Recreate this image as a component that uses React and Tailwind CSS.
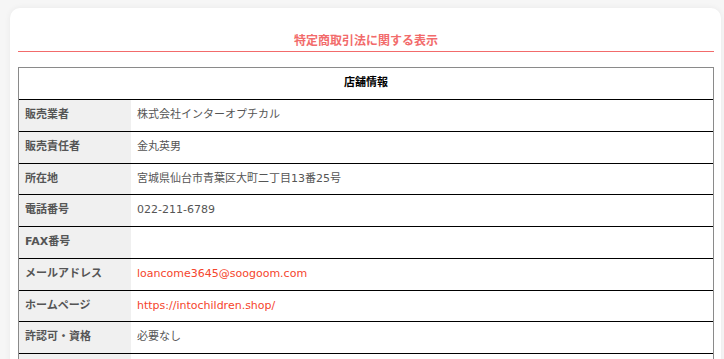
const rows = [
  { label: '販売業者', value: '株式会社インターオプチカル' },
  { label: '販売責任者', value: '金丸英男' },
  { label: '所在地', value: '宮城県仙台市青葉区大町二丁目13番25号' },
  { label: '電話番号', value: '022-211-6789' },
  { label: 'FAX番号', value: '' },
  { label: 'メールアドレス', value: 'loancome3645@soogoom.com', link: true },
  { label: 'ホームページ', value: 'https://intochildren.shop/', link: true },
  { label: '許認可・資格', value: '必要なし' },
  { label: '', value: '' },
];

export default function App() {
  return (
    <div className="h-[359px] overflow-hidden bg-[#f6f6f6] pt-[8px] pl-[10px] pr-[3px] font-['DejaVu_Sans','Noto_Sans_CJK_JP',sans-serif]">
      <div className="bg-white rounded-[10px] shadow-[0_0_6px_rgba(0,0,0,0.06)] pl-[8px] pr-[7px] pt-[24px] h-[400px]">
        {/* section title with underline rule */}
        <h1 className="text-center text-[12px] leading-[18px] font-bold text-[#f26b6b] pb-[1px]">
          特定商取引法に関する表示
        </h1>
        <div className="h-px bg-[#f26b6b]" />

        {/* shop info table */}
        <div className="mt-[15px] bg-[#8a8a8a] px-px pt-px">
          <div className="bg-white">
            <div className="h-[31px] flex items-center justify-center text-[11px] font-bold text-black">
              店舗情報
            </div>
            {rows.map((row, i) => (
              <div key={i} className="flex h-[31.75px] border-t border-black text-[11px]">
                <div className="w-[112px] shrink-0 bg-[#f0f0f0] flex items-center pl-[6px] font-bold text-[#555]">
                  {row.label}
                </div>
                <div
                  className={
                    row.link
                      ? 'flex items-center pl-[6px] text-[#f5452c]'
                      : 'flex items-center pl-[6px] text-[#555]'
                  }
                >
                  {row.value}
                </div>
              </div>
            ))}
          </div>
        </div>
      </div>
    </div>
  );
}
